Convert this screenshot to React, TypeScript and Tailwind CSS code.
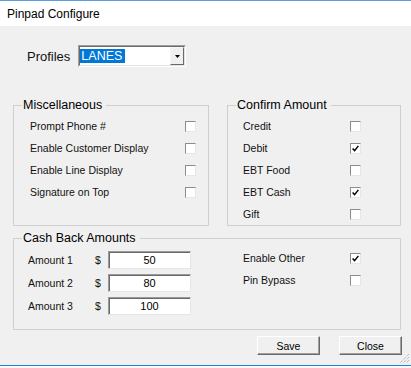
import React from "react";

function Check({ checked }: { checked?: boolean }) {
  return (
    <span className="w-[11px] h-[11px] shrink-0 bg-white border border-t-[#8c8c8c] border-l-[#8c8c8c] border-b-[#e6e6e6] border-r-[#e6e6e6] flex items-center justify-center">
      {checked && (
        <svg width="7" height="7" viewBox="0 0 7 7">
          <path d="M0.6 3.4 L2.6 5.6 L6.4 0.9" stroke="#000" strokeWidth="1.5" fill="none" />
        </svg>
      )}
    </span>
  );
}

function Row({ label, w, checked }: { label: string; w: string; checked?: boolean }) {
  return (
    <div className="flex items-center h-[22px]">
      <span className={`${w} text-[10.5px] leading-[12px] text-[#111]`}>{label}</span>
      <Check checked={checked} />
    </div>
  );
}

function Amount({ label, value }: { label: string; value: string }) {
  return (
    <div className="flex items-center h-[23px]">
      <span className="w-[67px] text-[10.5px] leading-[12px] text-[#111]">{label}</span>
      <span className="w-[13px] text-[10.5px] leading-[12px] text-[#111]">$</span>
      <div className="w-[83px] h-[18px] bg-white border border-t-[#9a9a9a] border-l-[#9a9a9a] border-b-[#e6e6e6] border-r-[#e6e6e6] shadow-[inset_1px_1px_0_#6a6a6a] flex items-center justify-center text-[11px] leading-[12px] text-black">
        {value}
      </div>
    </div>
  );
}

function Button({ label }: { label: string }) {
  return (
    <div className="w-[63px] h-[19px] bg-[#f0f0f0] border border-t-white border-l-white border-b-[#6a6a6a] border-r-[#6a6a6a] shadow-[inset_-1px_-1px_0_#a0a0a0] flex items-center justify-center text-[10.5px] leading-[12px] text-black">
      {label}
    </div>
  );
}

function Legend({ children }: { children: React.ReactNode }) {
  return (
    <legend className="ml-[8px] pl-[1px] pr-[4px] text-[12.5px] leading-[14px] text-black">{children}</legend>
  );
}

export default function App() {
  return (
    <div className="relative w-[411px] h-[368px] bg-[#f0f0f0] flex flex-col font-[family-name:'Liberation_Sans',Arial,sans-serif] overflow-hidden">
      <div className="h-[1px] bg-[#5c9fe3]" />
      <div className="h-[25px] bg-white flex items-center pl-[7px] text-[12px] text-black">
        Pinpad Configure
      </div>

      <div className="flex-1 flex flex-col pl-[13px] pr-[10px] pt-[19px]">
        {/* Profiles */}
        <div className="flex items-center pl-[14px] gap-[8px]">
          <span className="text-[13px] leading-[15px] text-[#111]">Profiles</span>
          <div className="w-[108px] h-[22px] flex border border-t-[#a0a0a0] border-l-[#a0a0a0] border-b-white border-r-white">
            <div className="flex-1 flex items-center bg-white border border-t-[#6a6a6a] border-l-[#6a6a6a] border-b-[#e3e3e3] border-r-[#e3e3e3]">
              <span className="h-[14px] leading-[14px] bg-[#0078d7] text-white text-[12.5px] pl-[1px] pr-[3px]">LANES</span>
              <div className="ml-auto h-full w-[14px] bg-[#f0f0f0] border border-t-[#f7f7f7] border-l-[#f7f7f7] border-b-[#6a6a6a] border-r-[#6a6a6a] flex items-center justify-center">
                <svg width="5" height="3" viewBox="0 0 5 3">
                  <path d="M0 0 H5 L2.5 3 Z" fill="#000" />
                </svg>
              </div>
            </div>
          </div>
        </div>

        {/* Misc + Confirm */}
        <div className="flex gap-[18px] mt-[31px]">
          <fieldset className="w-[196px] h-[128px] border border-[#cfcfcf]">
            <Legend>Miscellaneous</Legend>
            <div className="pl-[16px] pt-[3px]">
              <Row label="Prompt Phone #" w="w-[155px]" />
              <Row label="Enable Customer Display" w="w-[155px]" />
              <Row label="Enable Line Display" w="w-[155px]" />
              <Row label="Signature on Top" w="w-[155px]" />
            </div>
          </fieldset>
          <fieldset className="w-[174px] h-[128px] border border-[#cfcfcf]">
            <Legend>Confirm Amount</Legend>
            <div className="pl-[15px] pt-[3px]">
              <Row label="Credit" w="w-[107px]" />
              <Row label="Debit" w="w-[107px]" checked />
              <Row label="EBT Food" w="w-[107px]" />
              <Row label="EBT Cash" w="w-[107px]" checked />
              <Row label="Gift" w="w-[107px]" />
            </div>
          </fieldset>
        </div>

        {/* Cash back */}
        <fieldset className="mt-[5px] w-[388px] h-[99px] border border-[#cfcfcf]">
          <Legend>Cash Back Amounts</Legend>
          <div className="flex pl-[14px] pt-[3px]">
            <div className="w-[177px] flex flex-col">
              <Amount label="Amount 1" value="50" />
              <Amount label="Amount 2" value="80" />
              <Amount label="Amount 3" value="100" />
            </div>
            <div className="ml-[38px] flex flex-col -mt-[1px]">
              <Row label="Enable Other" w="w-[107px]" checked />
              <Row label="Pin Bypass" w="w-[107px]" />
            </div>
          </div>
        </fieldset>

        {/* Buttons */}
        <div className="flex justify-end gap-[19px] mt-[6px] -mr-[1px]">
          <Button label="Save" />
          <Button label="Close" />
        </div>
      </div>

      <div className="h-[1px] bg-[#2b7fd6]" />
      <div className="h-[2px] bg-[#f7f7f7]" />

      <svg className="absolute right-[1px] bottom-[4px]" width="11" height="11" viewBox="0 0 11 11">
        <path d="M10 1 L1 10 M10 4 L4 10 M10 7 L7 10" stroke="#a8a8a8" strokeWidth="1" strokeDasharray="1 1" />
      </svg>
    </div>
  );
}
